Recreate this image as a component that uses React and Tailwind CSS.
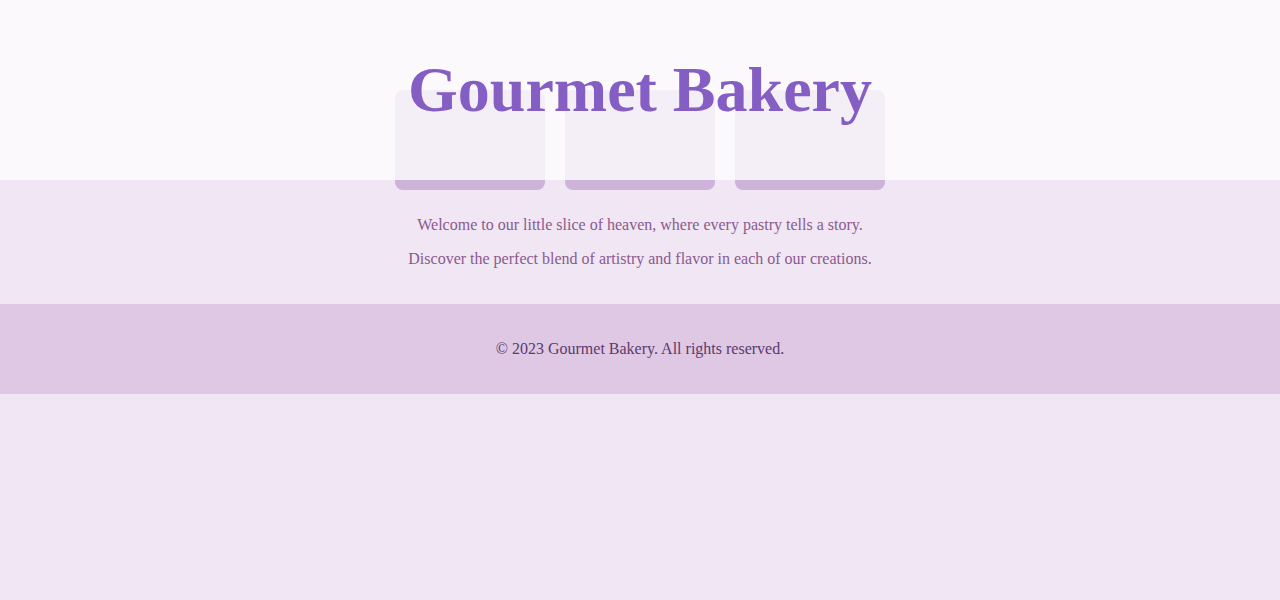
import React from 'react';

const serif = { fontFamily: '"Liberation Serif", "Times New Roman", serif' };

export default function App() {
  return (
    <div className="min-h-[600px] bg-[#f0e6f4]" style={serif}>
      <header className="relative h-[180px] bg-[#fcf9fd] pt-[55px] text-center">
        {/* decorative tiles behind the title */}
        <div className="absolute left-1/2 top-[90px] flex -translate-x-1/2 gap-5">
          {[0, 1, 2].map((i) => (
            <div
              key={i}
              className="h-[100px] w-[150px] rounded-lg border-b-[10px] border-[#cdb3da] bg-[#f4eef7]"
            />
          ))}
        </div>
        <h1 className="relative z-10 text-[64px] font-bold leading-[1.107] text-[#845ec2]">
          Gourmet Bakery
        </h1>
      </header>

      <main className="pt-[33px] pb-[33px] text-center text-base leading-6 text-[#8b5a8e]">
        <p>Welcome to our little slice of heaven, where every pastry tells a story.</p>
        <p className="mt-[10px]">Discover the perfect blend of artistry and flavor in each of our creations.</p>
      </main>

      <footer className="bg-[#dfc8e3] py-[33px] text-center text-base leading-6 text-[#5b3a6e]">
        © 2023 Gourmet Bakery. All rights reserved.
      </footer>
    </div>
  );
}
